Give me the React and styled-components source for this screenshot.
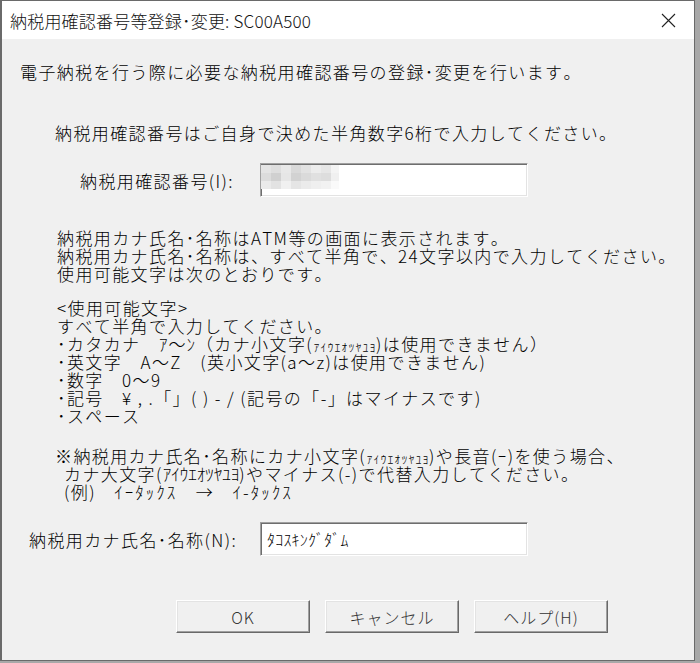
import React from "react";
import styled, { createGlobalStyle } from "styled-components";

const GlobalStyle = createGlobalStyle`
  html, body { margin: 0; padding: 0; }
  body { background: #a8a8a8; }
  #root { width: 700px; height: 663px; }
`;

const uiFont = `"Noto Sans CJK JP", "Noto Sans", sans-serif`;

const Window = styled.div`
  box-sizing: border-box;
  width: 695px;
  height: 661px;
  border: 1px solid #6a6a6a;
  border-left-width: 2px;
  display: flex;
  flex-direction: column;
  background: #f0f0f0;
  font-family: ${uiFont};
  font-kerning: none;
  color: #000;
`;

const TitleBar = styled.div`
  height: 38px;
  flex: none;
  background: #fff;
  display: flex;
  align-items: center;
  justify-content: space-between;
  padding: 0 18px 0 8px;
`;

const Title = styled.div`
  font-size: 17px;
  font-weight: 300;
  letter-spacing: 0.2px;
  color: #111;
`;

const CloseButton = styled.div`
  width: 16px;
  height: 16px;
  display: flex;
  align-items: center;
  justify-content: center;
`;

const Body = styled.div`
  flex: 1;
  display: flex;
  flex-direction: column;
  padding: 24px 0 0 18px;
`;

const Text = styled.div`
  font-size: 17px;
  font-weight: 300;
  letter-spacing: 1.4px;
  line-height: 18px;
  white-space: pre;
  margin-top: ${(p) => p.$gap || 0}px;
  padding-left: ${(p) => p.$indent || 0}px;
`;

const Line = styled.div`
  height: 18px;
  line-height: 18px;
  padding-left: ${(p) => p.$indent || 0}px;
`;

const Kana = styled.span`
  font-size: ${(p) => (p.$small ? 14 : 17)}px;
  letter-spacing: ${(p) => p.$spacing || 0}px;
  line-height: 1;
`;

const FieldRow = styled.div`
  display: grid;
  grid-template-columns: 240px 268px;
  align-items: center;
  margin-top: ${(p) => p.$gap}px;
`;

const Label = styled.div`
  font-size: 17px;
  font-weight: 300;
  letter-spacing: 1.4px;
  padding-left: ${(p) => p.$indent}px;
  white-space: pre;
`;

const Input = styled.div`
  box-sizing: border-box;
  height: 34px;
  background: #fff;
  border-top: 1px solid #a0a0a0;
  border-left: 1px solid #a0a0a0;
  border-right: 1px solid #ffffff;
  border-bottom: 1px solid #ffffff;
  box-shadow: inset 1px 1px 0 #6e6e6e, inset -1px -1px 0 #e3e3e3;
  display: flex;
  align-items: center;
  padding-left: 6px;
  font-size: 16px;
  font-weight: 300;
  letter-spacing: 0.2px;
  overflow: hidden;
`;

const Mosaic = styled.svg`
  display: block;
  margin-left: -6px;
  align-self: flex-start;
`;

const ButtonRow = styled.div`
  display: flex;
  gap: 15px;
  padding-left: 156px;
  margin-top: 44px;
`;

const Button = styled.div`
  box-sizing: border-box;
  width: 134px;
  height: 33px;
  background: #f0f0f0;
  border-top: 1px solid #ffffff;
  border-left: 1px solid #ffffff;
  border-right: 1px solid #696969;
  border-bottom: 1px solid #696969;
  box-shadow: inset -1px -1px 0 #a0a0a0, inset 1px 1px 0 #e3e3e3;
  display: flex;
  align-items: center;
  justify-content: center;
  font-size: 16px;
  font-weight: 300;
  letter-spacing: 1px;
  color: #333;
`;

const mosaicCells = [
  ["#e4e4e4", "#dedede", "#e8e8e8", "#d9d9d9", "#e2e2e2", "#ececec", "#e6e6e6", "#f4f4f4"],
  ["#dcdcdc", "#d0d0d0", "#e6e6e6", "#d2d2d2", "#dadada", "#e0e0e0", "#dddddd", "#f0f0f0"],
  ["#eaeaea", "#e2e2e2", "#f0f0f0", "#e5e5e5", "#ebebeb", "#efefef", "#f2f2f2", "#fafafa"],
];

export default function App() {
  return (
    <>
      <GlobalStyle />
      <Window>
        <TitleBar>
          <Title>納税用確認番号等登録･変更: SC00A500</Title>
          <CloseButton>
            <svg width="15" height="15" viewBox="0 0 15 15">
              <path d="M1 1 L14 14 M14 1 L1 14" stroke="#222" strokeWidth="1.1" fill="none" />
            </svg>
          </CloseButton>
        </TitleBar>
        <Body>
          <Text>電子納税を行う際に必要な納税用確認番号の登録･変更を行います。</Text>
          <Text $gap={43} $indent={35}>納税用確認番号はご自身で決めた半角数字6桁で入力してください。</Text>
          <FieldRow $gap={21}>
            <Label $indent={60}>納税用確認番号(I):</Label>
            <Input>
              <Mosaic width="78" height="26" viewBox="0 0 78 26">
                {mosaicCells.map((row, r) =>
                  row.map((c, i) => (
                    <rect key={r + "-" + i} x={i * 10} y={r * 8 + 1} width="10" height="8" fill={c} />
                  ))
                )}
              </Mosaic>
            </Input>
          </FieldRow>
          <Text $gap={32} $indent={37}>
            <Line>納税用カナ氏名･名称はATM等の画面に表示されます。</Line>
            <Line>納税用カナ氏名･名称は、すべて半角で、24文字以内で入力してください。</Line>
            <Line>使用可能文字は次のとおりです。</Line>
          </Text>
          <Text $gap={16} $indent={37}>
            <Line>&lt;使用可能文字&gt;</Line>
            <Line>すべて半角で入力してください。</Line>
            <Line>
              ･カタカナ　<Kana $spacing={1}>ｱ～ﾝ</Kana>（カナ小文字(<Kana $small>ｧｨｩｪｫｯｬｭｮ</Kana>)は使用できません）
            </Line>
            <Line>･英文字　A～Z　(英小文字(a～z)は使用できません)</Line>
            <Line>･数字　0～9</Line>
            <Line>･記号　¥ , .「」( ) - / (記号の「-」はマイナスです)</Line>
            <Line>･スペース</Line>
          </Text>
          <Text $gap={22} $indent={35}>
            <Line>
              ※納税用カナ氏名･名称にカナ小文字(<Kana $small>ｧｨｩｪｫｯｬｭｮ</Kana>)や長音(ｰ)を使う場合、
            </Line>
            <Line $indent={9}>
              カナ大文字(<Kana>ｱｲｳｴｵﾂﾔﾕﾖ</Kana>)やマイナス(-)で代替入力してください。
            </Line>
            <Line $indent={9}>
              (例)　<Kana $spacing={2}>ｲｰﾀｯｸｽ</Kana>　→　<Kana $spacing={2}>ｲ-ﾀｯｸｽ</Kana>
            </Line>
          </Text>
          <FieldRow $gap={21}>
            <Label $indent={9}>納税用カナ氏名･名称(N):</Label>
            <Input>ﾀｺｽｷﾝｸﾞﾀﾞﾑ</Input>
          </FieldRow>
          <ButtonRow>
            <Button>OK</Button>
            <Button>キャンセル</Button>
            <Button>ヘルプ(H)</Button>
          </ButtonRow>
        </Body>
      </Window>
    </>
  );
}
